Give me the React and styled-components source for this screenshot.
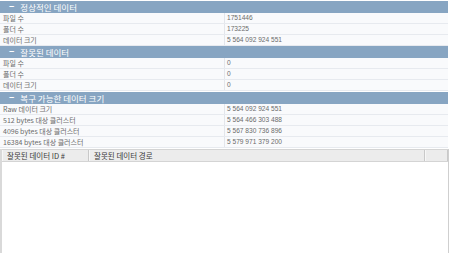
import React from "react";
import styled, { createGlobalStyle } from "styled-components";

const GlobalStyle = createGlobalStyle`
  html, body {
    margin: 0;
    padding: 0;
    background: #ffffff;
  }
  body {
    font-family: "Noto Sans CJK KR", "Noto Sans", sans-serif;
    font-size: 7px;
    color: #6b6b6b;
  }
`;

const Page = styled.div`
  width: 450px;
  height: 253px;
  display: flex;
  flex-direction: column;
  overflow: hidden;
  background: #fff;
`;

const Summary = styled.div`
  display: flex;
  flex-direction: column;
  padding: 1px 2px 0 0;
  border-right: 1px solid #d6d6d6;
  width: 448px;
  box-sizing: content-box;
`;

const SectionHeader = styled.div`
  height: 12px;
  background: #87a5c2;
  color: #ffffff;
  display: flex;
  align-items: center;
  padding-left: 9px;
  gap: 6px;
  font-size: 8.5px;
  line-height: 12px;
  margin-top: ${(p) => (p.$gap ? "1px" : "0")};
`;

const Toggle = styled.span`
  font-weight: bold;
  font-size: 9px;
`;

const Row = styled.div`
  height: 11px;
  display: grid;
  grid-template-columns: 225px 1fr;
  background: #f9fafc;
  border-bottom: 1px solid #e7eaef;
  box-sizing: border-box;
`;

const Label = styled.div`
  padding-left: 3px;
  line-height: 10px;
  white-space: nowrap;
  border-right: 1px solid #e3e6eb;
`;

const Value = styled.div`
  padding-left: 2px;
  line-height: 10px;
  font-family: "Liberation Sans", "Noto Sans", sans-serif;
  font-size: 6.6px;
  white-space: nowrap;
`;

const List = styled.div`
  flex: 1;
  display: flex;
  flex-direction: column;
  border-left: 2px solid #d9d9d9;
  border-right: 1px solid #cfcfcf;
  margin-top: 1px;
  margin-right: 1px;
  background: #fff;
`;

const ListHeader = styled.div`
  height: 13px;
  display: grid;
  grid-template-columns: 87px 336px 1fr;
  background: #ececec;
  border-bottom: 1px solid #d4d4d4;
  border-top: 1px solid #d4d4d4;
  box-sizing: border-box;
`;

const HeaderCell = styled.div`
  padding-left: 4px;
  line-height: 11px;
  font-size: 7.5px;
  color: #3a3a3a;
  white-space: nowrap;
  border-right: 1px solid #c9c9c9;
  border-left: 1px solid #f7f7f7;
`;

const ListBody = styled.div`
  flex: 1;
`;

const sections = [
  {
    title: "정상적인 데이터",
    rows: [
      ["파일 수", "1751446"],
      ["폴더 수", "173225"],
      ["데이터 크기", "5 564 092 924 551"],
    ],
  },
  {
    title: "잘못된 데이터",
    rows: [
      ["파일 수", "0"],
      ["폴더 수", "0"],
      ["데이터 크기", "0"],
    ],
  },
  {
    title: "복구 가능한 데이터 크기",
    rows: [
      ["Raw 데이터 크기", "5 564 092 924 551"],
      ["512 bytes 대상 클러스터", "5 564 466 303 488"],
      ["4096 bytes 대상 클러스터", "5 567 830 736 896"],
      ["16384 bytes 대상 클러스터", "5 579 971 379 200"],
    ],
  },
];

const App = () => {
  return (
    <>
      <GlobalStyle />
      <Page>
        <Summary>
          {sections.map((s, i) => (
            <React.Fragment key={s.title}>
              <SectionHeader $gap={i === 2}>
                <Toggle>−</Toggle>
                <span>{s.title}</span>
              </SectionHeader>
              {s.rows.map(([label, value]) => (
                <Row key={label}>
                  <Label>{label}</Label>
                  <Value>{value}</Value>
                </Row>
              ))}
            </React.Fragment>
          ))}
        </Summary>
        <List>
          <ListHeader>
            <HeaderCell>잘못된 데이터 ID #</HeaderCell>
            <HeaderCell>잘못된 데이터 경로</HeaderCell>
            <HeaderCell />
          </ListHeader>
          <ListBody />
        </List>
      </Page>
    </>
  );
};

export default App;
